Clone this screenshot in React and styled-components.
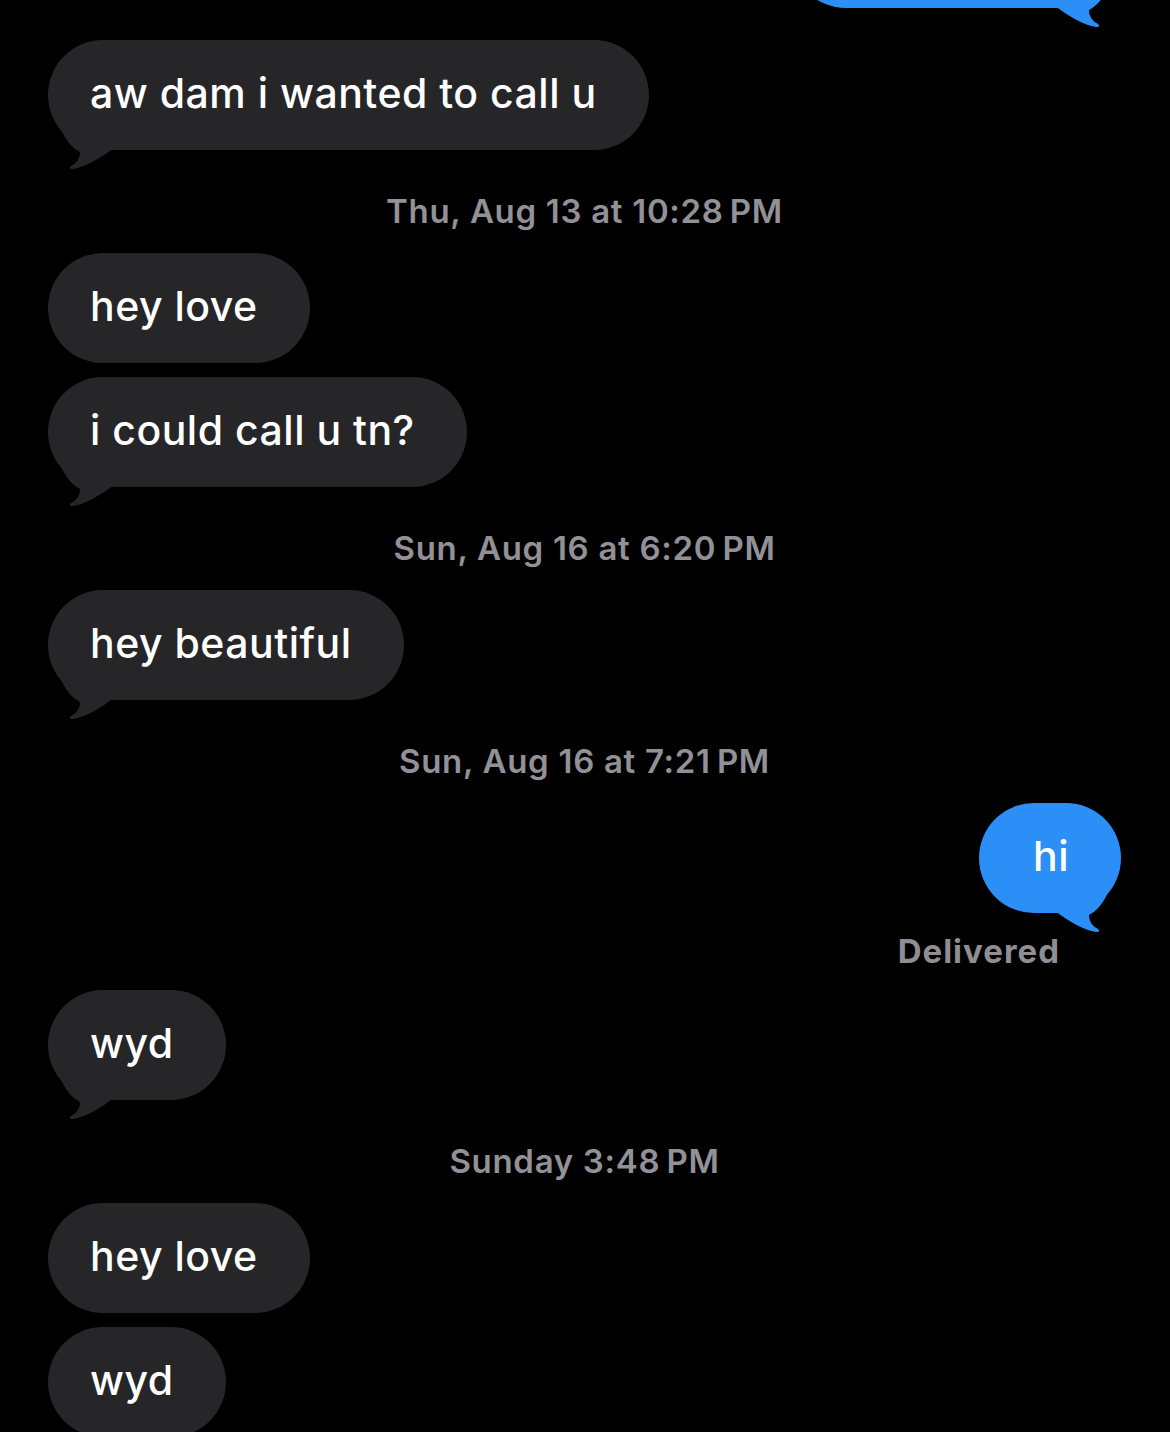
import React from 'react';
import styled, { createGlobalStyle } from 'styled-components';

const GlobalStyle = createGlobalStyle`
  html, body {
    margin: 0;
    padding: 0;
    background: #000;
  }
  body {
    font-family: Inter, 'Noto Sans', 'Liberation Sans', sans-serif;
    -webkit-font-smoothing: antialiased;
  }
`;

const GRAY = '#262628';
const BLUE = '#2c8ef7';

const Thread = styled.div`
  display: flex;
  flex-direction: column;
  width: 1170px;
  padding: 0 49px 0 48px;
  box-sizing: border-box;
  overflow: hidden;
  height: 1432px;
`;

const Group = styled.div`
  display: flex;
  flex-direction: column;
  align-items: ${({ $me }) => ($me ? 'flex-end' : 'flex-start')};
  gap: 14px;
  margin-top: ${({ $top }) => $top || 0}px;
`;

const Bubble = styled.div`
  position: relative;
  box-sizing: border-box;
  min-width: ${({ $width }) => ($width ? `${$width}px` : 'auto')};
  padding: 29px ${({ $me }) => ($me ? '52px 33px 54px' : '52px 33px 42px')};
  border-radius: 55px;
  background: ${({ $me }) => ($me ? BLUE : GRAY)};
  color: #fff;
  font-size: 41px;
  line-height: 48px;
  font-weight: 500;
  letter-spacing: 0.5px;
  white-space: nowrap;
`;

const Tail = styled.svg`
  position: absolute;
  bottom: -20px;
  width: 70px;
  height: 50px;
  ${({ $me }) => ($me ? 'right: 0; transform: scaleX(-1);' : 'left: 0;')}
`;

const Stamp = styled.div`
  margin: 41px 0 22px;
  text-align: center;
  font-size: 33px;
  line-height: 40px;
  font-weight: 600;
  letter-spacing: 0.7px;
  color: #929197;
`;

const Status = styled.div`
  margin: 4px 61px 0 0;
  font-size: 33px;
  line-height: 40px;
  font-weight: 700;
  letter-spacing: 1px;
  color: #8e8e93;
`;

const Msg = ({ me, tail, width, children }) => (
  <Bubble $me={me} $width={width}>
    {children}
    {tail && (
      <Tail $me={me} viewBox="0 0 70 50">
        <path
          d="M12 6 C16 20 26 29 32 32 C32 38 29 43 23 46 C21 47.5 22 49.5 25 49 C37 47 51 39 66 28 L66 6 Z"
          fill={me ? BLUE : GRAY}
        />
      </Tail>
    )}
  </Bubble>
);

const App = () => {
  return (
    <>
      <GlobalStyle />
      <Thread>
        <Group $me $top={-102}>
          <Msg me tail width={330}>&nbsp;</Msg>
        </Group>

        <Group $top={32}>
          <Msg tail>aw dam i wanted to call u</Msg>
        </Group>

        <Stamp>Thu, Aug 13 at 10:28{'\u202F'}PM</Stamp>

        <Group>
          <Msg>hey love</Msg>
          <Msg tail>i could call u tn?</Msg>
        </Group>

        <Stamp>Sun, Aug 16 at 6:20{'\u202F'}PM</Stamp>

        <Group>
          <Msg tail>hey beautiful</Msg>
        </Group>

        <Stamp>Sun, Aug 16 at 7:21{'\u202F'}PM</Stamp>

        <Group $me>
          <Msg me tail>hi</Msg>
          <Status>Delivered</Status>
        </Group>

        <Group $top={19}>
          <Msg tail>wyd</Msg>
        </Group>

        <Stamp>Sunday 3:48{'\u202F'}PM</Stamp>

        <Group>
          <Msg>hey love</Msg>
          <Msg>wyd</Msg>
        </Group>
      </Thread>
    </>
  );
};

export default App;
